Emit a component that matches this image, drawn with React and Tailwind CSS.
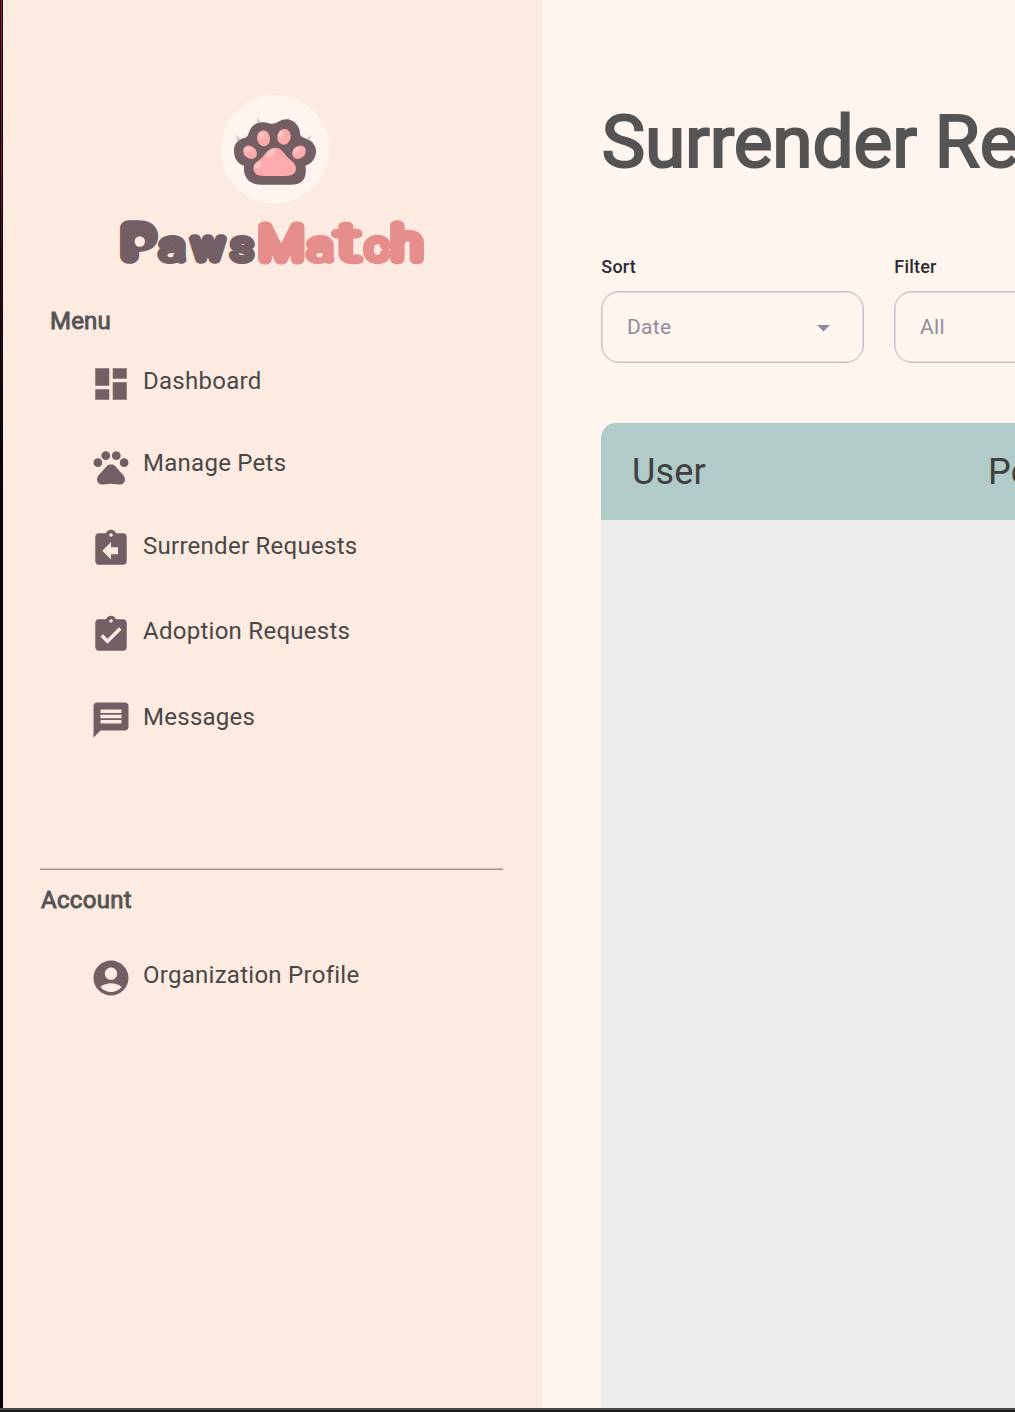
import React from 'react';
import { MdDashboard, MdPets, MdAssignmentReturn, MdAssignmentTurnedIn, MdMessage, MdAccountCircle, MdArrowDropDown } from 'react-icons/md';

const menu = [
  { label: 'Dashboard', Icon: MdDashboard, gap: 'mt-[26px]', lift: '-mt-[7px]' },
  { label: 'Manage Pets', Icon: MdPets, gap: 'mt-[41px]', lift: '-mt-[9px]' },
  { label: 'Surrender Requests', Icon: MdAssignmentReturn, gap: 'mt-[40px]', lift: '-mt-[7px]' },
  { label: 'Adoption Requests', Icon: MdAssignmentTurnedIn, gap: 'mt-[44px]', lift: '-mt-[9px]' },
  { label: 'Messages', Icon: MdMessage, gap: 'mt-[43px]', lift: '-mt-[7px]' },
];

function NavItem({ label, Icon, gap, lift }) {
  return (
    <a className={`flex h-[42px] items-center gap-[11px] pl-[87px] ${gap}`}>
      <Icon className="size-[42px] shrink-0 text-[#735f63]" />
      <span className={`text-[24px] leading-8 tracking-[0.27px] text-[#484848] ${lift}`}>{label}</span>
    </a>
  );
}

function PawLogo() {
  return (
    <svg className="block size-[110px]" viewBox="0 0 110 110">
      <circle cx="55" cy="55.3" r="54.3" fill="#fff5ef" />
      <g transform="translate(0 -3.7)">
        <g fill="#cfd3d6">
          <path d="M37 34 V27 Q39 28 41 33Z M65.500 33 Q67 28 69 26.500 V34Z M17 51 L15.500 44.500 Q18 45 21.500 50Z M86 49 Q89 45 91 45 L90 51Z" />
        </g>
        <path d="M51 33.500 C58 34 59 29 66 29 C74 29 80 36 80 43 C80 47 84 47 87 49 C93 51 96 56 96 61 C96 68 92 73 85.500 75.500 C87 86 84 94.500 71 94.500 H41 C28 94.500 23 86 24 75.500 C17 73 14 68 14 60 C14 54 18 49 25 47.500 C29 46 28 42 31 38 C36 31 43 31 51 33.500Z" fill="#735f63" />
        <g fill="#fdaaac">
          <ellipse cx="43.500" cy="48" rx="6.500" ry="8" transform="rotate(-8 43.500 48)" />
          <ellipse cx="64" cy="46.500" rx="6.700" ry="7.900" transform="rotate(12 64 46.500)" />
          <ellipse cx="30" cy="62" rx="6" ry="7.500" transform="rotate(-48 30 62)" />
          <ellipse cx="79" cy="62" rx="6" ry="7.500" transform="rotate(48 79 62)" />
          <path d="M55 57.500 C63 57.500 64 65 71 70 C75 73 76 76 76 79 C75.500 84.500 71 85.600 66 85.600 H43 C37 85.600 34 83 33.500 79 C33 75 36 72 39 70 C45 66 47 57.500 55 57.500Z" />
        </g>
        <g fill="#fec3c4">
          <ellipse cx="41.500" cy="45.500" rx="2.600" ry="3.300" />
          <ellipse cx="61" cy="44" rx="2.600" ry="3.300" transform="rotate(25 61 44)" />
          <ellipse cx="28.500" cy="59.500" rx="3.600" ry="2.500" transform="rotate(25 28.500 59.500)" />
          <ellipse cx="76.500" cy="60" rx="3.600" ry="2.500" transform="rotate(-40 76.500 60)" />
          <ellipse cx="51" cy="63" rx="5" ry="2.800" transform="rotate(-42 51 63)" />
          <ellipse cx="38" cy="75" rx="4" ry="2.800" transform="rotate(-35 38 75)" />
        </g>
      </g>
    </svg>
  );
}

const letters = [
  { c: 'P', x: 124.5, w: 27, size: 39, stroke: 15.5 },
  { c: 'a', x: 160, w: 25, size: 39, stroke: 8 },
  { c: 'w', x: 192.5, w: 31, size: 36, stroke: 9.5 },
  { c: 's', x: 231, w: 22, size: 39, stroke: 8 },
  { c: 'M', x: 259.3, w: 44, size: 45, stroke: 11 },
  { c: 'a', x: 308, w: 25, size: 39, stroke: 8 },
  { c: 't', x: 336, w: 24, size: 50, stroke: 8.5 },
  { c: 'c', x: 365.8, w: 22.5, size: 38, stroke: 8.3 },
  { c: 'h', x: 392, w: 30, size: 44, stroke: 10.5 },
];

function Wordmark() {
  return (
    <svg className="block h-[60px] w-[310px]" viewBox="117 213 310 60" fontFamily="Roboto, sans-serif" fontWeight="100" strokeLinejoin="round" strokeLinecap="round">
      {letters.map((l, i) => (
        <text key={i} x={l.x} y={264 - l.stroke / 2} fontSize={l.size} strokeWidth={l.stroke} textLength={l.w} lengthAdjust="spacingAndGlyphs" fill={i < 4 ? '#735f63' : '#e58e8b'} stroke={i < 4 ? '#735f63' : '#e58e8b'}>{l.c}</text>
      ))}
      <g fill="#fdeae0">
        <circle cx="139.800" cy="241.500" r="5.200" />
        <ellipse cx="170.500" cy="255.300" rx="3" ry="2" />
        <ellipse cx="319.500" cy="255.300" rx="3" ry="2" />
      </g>
    </svg>
  );
}

function Select({ label, value }) {
  return (
    <div className="w-[263px] shrink-0">
      <div className="h-[36px] pl-[0.3px] text-[18px] leading-[24px] font-medium tracking-[0.2px] text-[#2b2b33]">{label}</div>
      <div className="flex h-[72px] items-center justify-between rounded-[18px] border-[1.5px] border-[#c4c3cb] pr-[24px] pl-[25px] shadow-[inset_0_0_0_0.5px_#c4c3cb]">
        <span className="pt-px text-[21px] tracking-[0.3px] text-[#8f8e98]">{value}</span>
        <MdArrowDropDown className="size-[31px] text-[#8f8e98]" />
      </div>
    </div>
  );
}

export default function App() {
  return (
    <div className="flex h-[1412px] w-[1015px] flex-col overflow-hidden bg-[#1c1b1d] font-['Roboto',sans-serif]">
      <div className="flex h-[1408px]">
        <div className="w-[3px] shrink-0 bg-[#05030a] px-px">
          <div className="h-[500px] bg-linear-to-b from-[#c51c50] to-[#05030a]" />
        </div>
        <aside className="w-[539px] shrink-0 bg-[#fdeae0]">
          <div className="mt-[94px] ml-[217px]"><PawLogo /></div>
          <div className="mt-[9px] ml-[114px]"><Wordmark /></div>
          <h2 className="mt-[32px] ml-[47px] text-[24px] leading-[32px] tracking-[0.2px] text-[#545454] [-webkit-text-stroke:0.9px_#545454]">Menu</h2>
          <nav className="flex flex-col">{menu.map((m) => <NavItem key={m.label} {...m} />)}</nav>
          <div className="mt-[127px] ml-[37px] h-[2px] w-[463px] border-b border-[#989494] bg-[#cdbfb9]" />
          <h2 className="mt-[14px] ml-[38px] text-[24px] leading-[32px] tracking-[0.3px] text-[#545454] [-webkit-text-stroke:0.9px_#545454]">Account</h2>
          <NavItem label="Organization Profile" Icon={MdAccountCircle} gap="mt-[41px]" lift="-mt-[7px]" />
        </aside>
        <main className="flex min-w-0 grow flex-col overflow-hidden bg-[#fff5ef] pl-[59px]">
          <h1 className="mt-[92px] pl-[0.7px] text-[73px] leading-[100px] tracking-[-0.1px] whitespace-nowrap text-[#545454] [-webkit-text-stroke:2.2px_#545454]">Surrender Requests</h1>
          <div className="mt-[63px] flex gap-[30px]">
            <Select label="Sort" value="Date" />
            <Select label="Filter" value="All" />
          </div>
          <section className="mt-[60px] flex w-[1100px] grow flex-col overflow-hidden rounded-tl-[15px] bg-[#ececec]">
            <div className="flex h-[97px] items-center bg-[#b1cbc9] pl-[31px] text-[36px] tracking-[0.2px] text-[#404040]">
              <span className="w-[356px]">User</span>
              <span>Pet</span>
            </div>
          </section>
        </main>
      </div>
      <div className="h-[2px] bg-[#474648]" />
    </div>
  );
}
